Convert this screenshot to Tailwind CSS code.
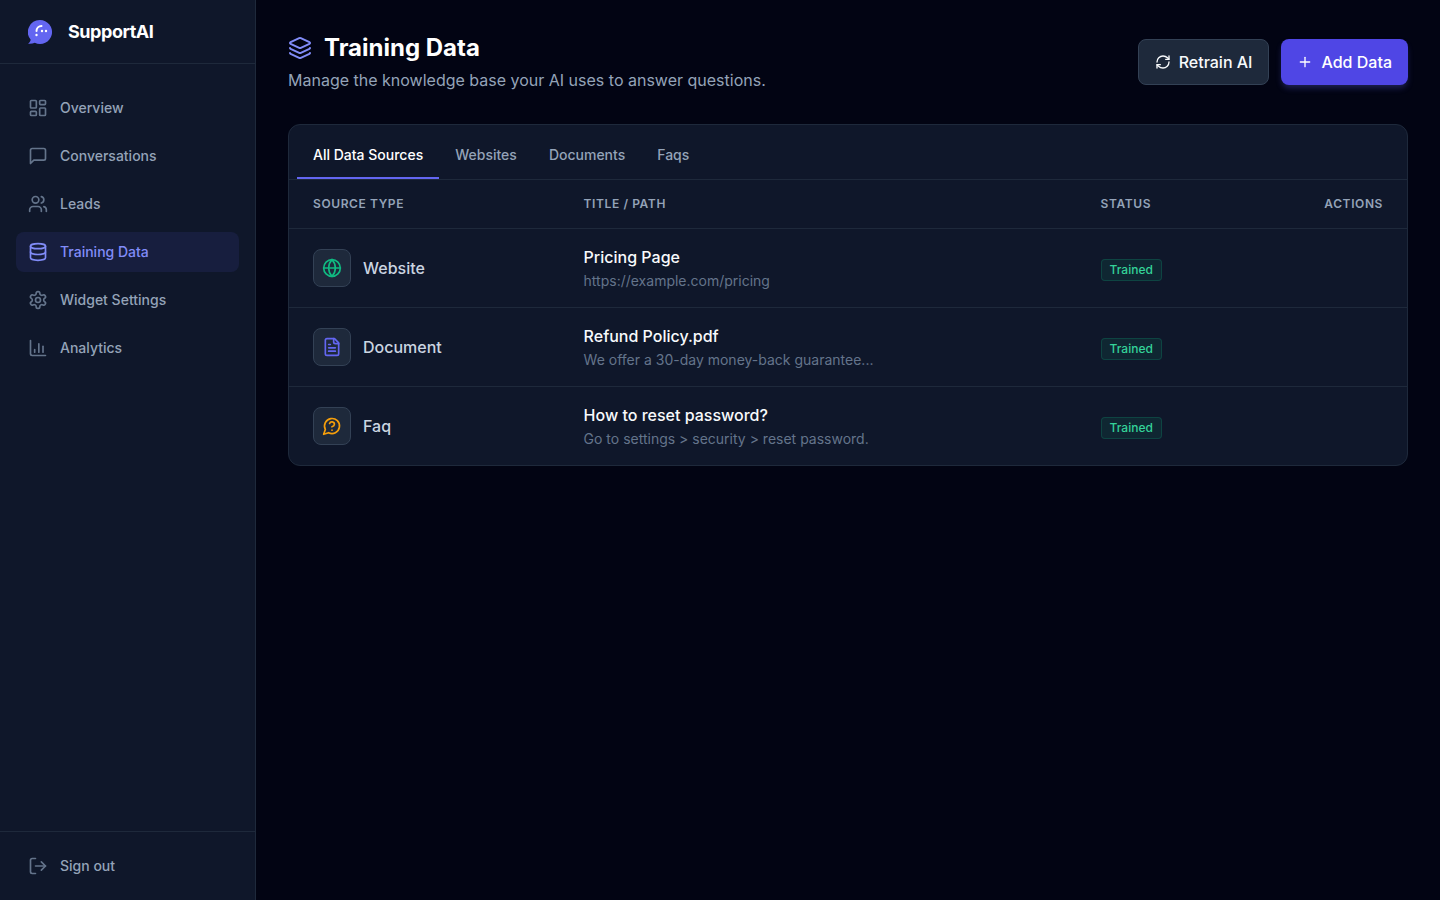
<!DOCTYPE html>
<html lang="en">
<head>
<meta charset="utf-8">
<title>Training Data</title>
<script src="https://cdn.jsdelivr.net/npm/@tailwindcss/browser@4"></script>
</head>
<body class="bg-[#020413] font-['Inter',sans-serif] text-white">
<div class="flex h-[900px] w-[1440px] overflow-hidden">
  <aside class="flex w-64 shrink-0 flex-col border-r border-[#1e293b] bg-[#0f172a]">
    <div class="flex h-16 items-center gap-4 border-b border-[#1e293b] px-7">
      <svg class="h-6 w-6" viewBox="0 0 24 24"><path fill="#6366f1" d="M12 0a12 12 0 1 1-5.200 22.800C5 23.600 2.600 24 0 23.700c1.400-1 2.300-2.300 2.700-4A12 12 0 0 1 12 0z"/><path fill="none" stroke="#fff" stroke-width="2" stroke-linecap="round" d="M8.500 11A5 5 0 0 1 13.500 6"/><circle cx="8.500" cy="15" r="1.200" fill="#fff"/><circle cx="14" cy="11" r="1.200" fill="#fff"/><circle cx="18" cy="11" r="1.200" fill="#fff"/></svg>
      <span class="text-lg font-bold tracking-tight">SupportAI</span>
    </div>
    <nav class="flex flex-1 flex-col gap-2 px-4 pt-6">
      <a class="flex h-10 items-center gap-3 rounded-lg px-3 text-sm font-medium text-[#94a3b8]">
        <svg class="h-5 w-5 text-[#64748b]" viewBox="0 0 24 24" fill="none" stroke="currentColor" stroke-width="2" stroke-linecap="round" stroke-linejoin="round"><rect x="3" y="3" width="7" height="9" rx="1"/><rect x="14" y="3" width="7" height="5" rx="1"/><rect x="14" y="12" width="7" height="9" rx="1"/><rect x="3" y="16" width="7" height="5" rx="1"/></svg>
        Overview
      </a>
      <a class="flex h-10 items-center gap-3 rounded-lg px-3 text-sm font-medium text-[#94a3b8]">
        <svg class="h-5 w-5 text-[#64748b]" viewBox="0 0 24 24" fill="none" stroke="currentColor" stroke-width="2" stroke-linecap="round" stroke-linejoin="round"><path d="M21 15a2 2 0 0 1-2 2H7l-4 4V5a2 2 0 0 1 2-2h14a2 2 0 0 1 2 2z"/></svg>
        Conversations
      </a>
      <a class="flex h-10 items-center gap-3 rounded-lg px-3 text-sm font-medium text-[#94a3b8]">
        <svg class="h-5 w-5 text-[#64748b]" viewBox="0 0 24 24" fill="none" stroke="currentColor" stroke-width="2" stroke-linecap="round" stroke-linejoin="round"><path d="M16 21v-2a4 4 0 0 0-4-4H6a4 4 0 0 0-4 4v2"/><circle cx="9" cy="7" r="4"/><path d="M22 21v-2a4 4 0 0 0-3-3.870"/><path d="M16 3.130a4 4 0 0 1 0 7.750"/></svg>
        Leads
      </a>
      <a class="flex h-10 items-center gap-3 rounded-lg bg-[#6366f1]/10 px-3 text-sm font-medium text-[#818cf8]">
        <svg class="h-5 w-5" viewBox="0 0 24 24" fill="none" stroke="currentColor" stroke-width="2" stroke-linecap="round" stroke-linejoin="round"><ellipse cx="12" cy="5" rx="9" ry="3"/><path d="M3 5v14a9 3 0 0 0 18 0V5"/><path d="M3 12a9 3 0 0 0 18 0"/></svg>
        Training Data
      </a>
      <a class="flex h-10 items-center gap-3 rounded-lg px-3 text-sm font-medium text-[#94a3b8]">
        <svg class="h-5 w-5 text-[#64748b]" viewBox="0 0 24 24" fill="none" stroke="currentColor" stroke-width="2" stroke-linecap="round" stroke-linejoin="round"><path d="M12.220 2h-.440a2 2 0 0 0-2 2v.180a2 2 0 0 1-1 1.730l-.430.250a2 2 0 0 1-2 0l-.150-.080a2 2 0 0 0-2.730.730l-.220.380a2 2 0 0 0 .730 2.730l.150.100a2 2 0 0 1 1 1.720v.510a2 2 0 0 1-1 1.740l-.150.090a2 2 0 0 0-.730 2.730l.220.380a2 2 0 0 0 2.730.730l.150-.080a2 2 0 0 1 2 0l.430.250a2 2 0 0 1 1 1.730V20a2 2 0 0 0 2 2h.440a2 2 0 0 0 2-2v-.180a2 2 0 0 1 1-1.730l.430-.250a2 2 0 0 1 2 0l.150.080a2 2 0 0 0 2.730-.730l.220-.390a2 2 0 0 0-.730-2.730l-.150-.080a2 2 0 0 1-1-1.740v-.500a2 2 0 0 1 1-1.740l.150-.090a2 2 0 0 0 .730-2.730l-.220-.380a2 2 0 0 0-2.730-.730l-.150.080a2 2 0 0 1-2 0l-.430-.250a2 2 0 0 1-1-1.730V4a2 2 0 0 0-2-2z"/><circle cx="12" cy="12" r="3"/></svg>
        Widget Settings
      </a>
      <a class="flex h-10 items-center gap-3 rounded-lg px-3 text-sm font-medium text-[#94a3b8]">
        <svg class="h-5 w-5 text-[#64748b]" viewBox="0 0 24 24" fill="none" stroke="currentColor" stroke-width="2" stroke-linecap="round" stroke-linejoin="round"><path d="M3 3v16a2 2 0 0 0 2 2h16"/><path d="M8 17v-3"/><path d="M13 17V7"/><path d="M18 17v-7"/></svg>
        Analytics
      </a>
    </nav>
    <div class="border-t border-[#1e293b] px-4 py-3.5">
      <a class="flex h-10 items-center gap-3 rounded-lg px-3 text-sm font-medium text-[#94a3b8]">
        <svg class="h-5 w-5 text-[#64748b]" viewBox="0 0 24 24" fill="none" stroke="currentColor" stroke-width="2" stroke-linecap="round" stroke-linejoin="round"><path d="M9 21H5a2 2 0 0 1-2-2V5a2 2 0 0 1 2-2h4"/><path d="M16 17l5-5-5-5"/><path d="M21 12H9"/></svg>
        Sign out
      </a>
    </div>
  </aside>

  <main class="flex-1 px-8 pt-8">
    <header class="mb-8 flex items-center justify-between">
      <div>
        <div class="flex items-center gap-3">
          <svg class="h-6 w-6 text-[#818cf8]" viewBox="0 0 24 24" fill="none" stroke="currentColor" stroke-width="2" stroke-linecap="round" stroke-linejoin="round"><path d="M12.830 2.180a2 2 0 0 0-1.660 0L2.600 6.080a1 1 0 0 0 0 1.830l8.580 3.910a2 2 0 0 0 1.660 0l8.580-3.900a1 1 0 0 0 0-1.830z"/><path d="M2 12a1 1 0 0 0 .580.910l8.600 3.910a2 2 0 0 0 1.650 0l8.580-3.900A1 1 0 0 0 22 12"/><path d="M2 17a1 1 0 0 0 .580.910l8.600 3.910a2 2 0 0 0 1.650 0l8.580-3.900A1 1 0 0 0 22 17"/></svg>
          <h1 class="text-2xl font-bold">Training Data</h1>
        </div>
        <p class="mt-1 text-base text-[#94a3b8]">Manage the knowledge base your AI uses to answer questions.</p>
      </div>
      <div class="flex items-center gap-3">
        <button class="flex h-[46px] items-center gap-2 rounded-lg border border-[#334155] bg-[#1e293b] px-4 text-base font-medium text-[#f8fafc]">
          <svg class="h-4 w-4" viewBox="0 0 24 24" fill="none" stroke="currentColor" stroke-width="2" stroke-linecap="round" stroke-linejoin="round"><path d="M3 12a9 9 0 0 1 9-9 9.750 9.750 0 0 1 6.740 2.740L21 8"/><path d="M21 3v5h-5"/><path d="M21 12a9 9 0 0 1-9 9 9.750 9.750 0 0 1-6.740-2.740L3 16"/><path d="M8 16H3v5"/></svg>
          Retrain AI
        </button>
        <button class="flex h-[46px] items-center gap-2 rounded-lg bg-[#4f46e5] px-4 text-base font-medium text-white shadow-[0_4px_6px_-1px_rgba(99,102,241,0.3)]">
          <svg class="h-4 w-4" viewBox="0 0 24 24" fill="none" stroke="currentColor" stroke-width="2" stroke-linecap="round" stroke-linejoin="round"><path d="M5 12h14"/><path d="M12 5v14"/></svg>
          Add Data
        </button>
      </div>
    </header>

    <section class="overflow-hidden rounded-xl border border-[#1e293b] bg-[#0f172a]">
      <div class="flex border-b border-[#1e293b] px-2 pt-2">
        <button class="h-[46px] border-b-2 border-[#6366f1] px-4 text-sm font-medium text-white">All Data Sources</button>
        <button class="h-[46px] border-b-2 border-transparent px-4 text-sm font-medium text-[#94a3b8]">Websites</button>
        <button class="h-[46px] border-b-2 border-transparent px-4 text-sm font-medium text-[#94a3b8]">Documents</button>
        <button class="h-[46px] border-b-2 border-transparent px-4 text-sm font-medium text-[#94a3b8]">Faqs</button>
      </div>
      <table class="w-full table-fixed border-collapse text-left">
        <colgroup><col class="w-[270.600px]"><col class="w-[517px]"><col><col class="w-[130px]"></colgroup>
        <thead>
          <tr class="h-[48px] border-b border-[#1e293b] text-xs font-semibold tracking-wider text-[#94a3b8]">
            <th class="px-6 font-semibold">SOURCE TYPE</th>
            <th class="px-6 font-semibold">TITLE / PATH</th>
            <th class="px-6 font-semibold">STATUS</th>
            <th class="px-6 text-right font-semibold">ACTIONS</th>
          </tr>
        </thead>
        <tbody>
          <tr class="h-[79px] border-b border-[#1e293b]">
            <td class="px-6"><div class="flex items-center gap-3">
              <span class="flex h-[38px] w-[38px] items-center justify-center rounded-lg border border-[#334155] bg-[#1e293b]">
                <svg class="h-5 w-5 text-[#10b981]" viewBox="0 0 24 24" fill="none" stroke="currentColor" stroke-width="2" stroke-linecap="round" stroke-linejoin="round"><circle cx="12" cy="12" r="10"/><path d="M12 2a14.500 14.500 0 0 0 0 20 14.500 14.500 0 0 0 0-20"/><path d="M2 12h20"/></svg>
              </span>
              <span class="text-base font-medium text-[#cbd5e1]">Website</span>
            </div></td>
            <td class="px-6">
              <div class="text-base font-medium text-[#f8fafc]">Pricing Page</div>
              <div class="mt-0.5 text-sm text-[#64748b]">https://example.com/pricing</div>
            </td>
            <td class="px-6"><span class="mt-1 block w-fit rounded border border-[#10b981]/20 bg-[#10b981]/10 px-2 py-0.5 text-xs font-medium text-[#34d399]">Trained</span></td>
            <td></td>
          </tr>
          <tr class="h-[79px] border-b border-[#1e293b]">
            <td class="px-6"><div class="flex items-center gap-3">
              <span class="flex h-[38px] w-[38px] items-center justify-center rounded-lg border border-[#334155] bg-[#1e293b]">
                <svg class="h-5 w-5 text-[#6366f1]" viewBox="0 0 24 24" fill="none" stroke="currentColor" stroke-width="2" stroke-linecap="round" stroke-linejoin="round"><path d="M15 2H6a2 2 0 0 0-2 2v16a2 2 0 0 0 2 2h12a2 2 0 0 0 2-2V7z"/><path d="M14 2v4a2 2 0 0 0 2 2h4"/><path d="M10 9H8"/><path d="M16 13H8"/><path d="M16 17H8"/></svg>
              </span>
              <span class="text-base font-medium text-[#cbd5e1]">Document</span>
            </div></td>
            <td class="px-6">
              <div class="text-base font-medium text-[#f8fafc]">Refund Policy.pdf</div>
              <div class="mt-0.5 text-sm text-[#64748b]">We offer a 30-day money-back guarantee...</div>
            </td>
            <td class="px-6"><span class="mt-1 block w-fit rounded border border-[#10b981]/20 bg-[#10b981]/10 px-2 py-0.5 text-xs font-medium text-[#34d399]">Trained</span></td>
            <td></td>
          </tr>
          <tr class="h-[79px]">
            <td class="px-6"><div class="flex items-center gap-3">
              <span class="flex h-[38px] w-[38px] items-center justify-center rounded-lg border border-[#334155] bg-[#1e293b]">
                <svg class="h-5 w-5 text-[#f59e0b]" viewBox="0 0 24 24" fill="none" stroke="currentColor" stroke-width="2" stroke-linecap="round" stroke-linejoin="round"><path d="M7.900 20A9 9 0 1 0 4 16.100L2 22z"/><path d="M9.090 9a3 3 0 0 1 5.830 1c0 2-3 3-3 3"/><path d="M12 17h.010"/></svg>
              </span>
              <span class="text-base font-medium text-[#cbd5e1]">Faq</span>
            </div></td>
            <td class="px-6">
              <div class="text-base font-medium text-[#f8fafc]">How to reset password?</div>
              <div class="mt-0.5 text-sm text-[#64748b]">Go to settings &gt; security &gt; reset password.</div>
            </td>
            <td class="px-6"><span class="mt-1 block w-fit rounded border border-[#10b981]/20 bg-[#10b981]/10 px-2 py-0.5 text-xs font-medium text-[#34d399]">Trained</span></td>
            <td></td>
          </tr>
        </tbody>
      </table>
    </section>
  </main>
</div>
</body>
</html>
